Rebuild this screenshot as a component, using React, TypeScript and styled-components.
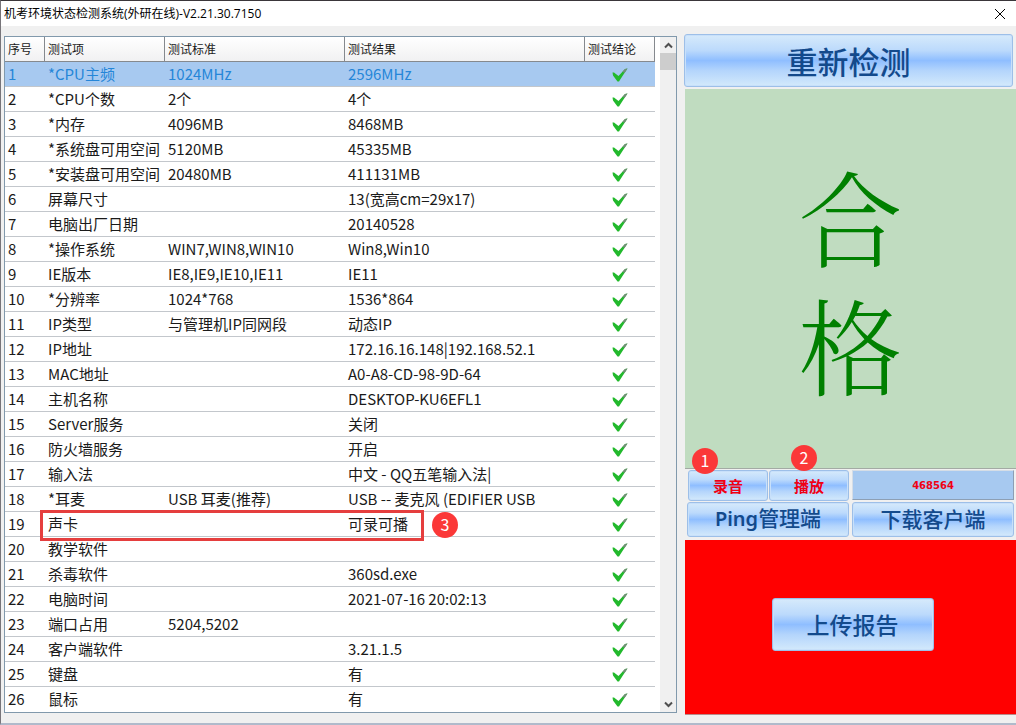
import React from 'react';
import styled, { createGlobalStyle } from 'styled-components';

const GlobalStyle = createGlobalStyle`
  *, *::before, *::after { box-sizing: border-box; }
  body {
    margin: 0;
    background: #f0f0f0;
    color: #1a1a1a;
    font-family: "Noto Sans CJK SC", sans-serif;
  }
  button, input { font-family: inherit; }
`;

const Window = styled.div`
  min-height: 100vh;
  display: flex;
  flex-direction: column;
  overflow: hidden;
  border-top: 1px solid #3a363a;
  border-left: 1px solid #77757a;
  border-bottom: 2px solid #b0bacb;
`;

const TitleBar = styled.header`
  display: flex;
  align-items: center;
  justify-content: space-between;
  height: 25px;
  padding: 0 8px 0 3px;
  background: #fff;
`;

const Title = styled.h1`
  margin: 0;
  font-family: "Open Sans", "Noto Sans CJK SC", sans-serif;
  font-size: 12px;
  line-height: 24px;
  font-weight: 400;
  color: #000;
`;

const CloseButton = styled.button`
  display: flex;
  padding: 2px;
  border: 0;
  background: none;
`;

const Content = styled.main`
  flex: 1;
  display: grid;
  grid-template-columns: minmax(0, 1fr) 332px;
  gap: 7px;
  padding: 8px 0 8px 3px;
`;

const ListPanel = styled.section`
  display: flex;
  align-self: start;
  margin-top: 2px;
  border: 1px solid #8199ac;
  background: #fff;
`;

const TableArea = styled.div`
  flex: 1;
  min-width: 0;
  padding-right: 5px;
`;

const Table = styled.table`
  width: 100%;
  table-layout: fixed;
  border-collapse: separate;
  border-spacing: 0;
`;

const HeadCell = styled.th<{ $width?: number }>`
  width: ${(p) => (p.$width ? `${p.$width}px` : 'auto')};
  height: 25px;
  padding: 0 3px;
  border-right: 1px solid #85898e;
  border-bottom: 1px solid #85898e;
  background: linear-gradient(#fff, #f1f1f2);
  font-size: 12px;
  line-height: 20px;
  font-weight: 400;
  text-align: left;
  white-space: nowrap;
`;

const Row = styled.tr<{ $selected?: boolean }>`
  position: relative;
  background: ${(p) => (p.$selected ? '#a7c9f0' : '#fff')};
  color: ${(p) => (p.$selected ? '#2586d8' : '#1a1a1a')};
`;

const Cell = styled.td`
  height: 25px;
  padding: 0 0 0 3px;
  border-bottom: 1px solid #c3c7cc;
  font-size: 15px;
  line-height: 24px;
  white-space: nowrap;

  tr:last-child > & { border-bottom-color: #fff; }
`;

const CheckCell = styled(Cell)`
  padding: 2px 0 0;
  text-align: center;

  svg { display: block; margin: 0 auto; }
`;

const Highlight = styled.span`
  position: absolute;
  top: -2px;
  left: 35px;
  z-index: 1;
  width: 384px;
  height: 31px;
  border: 3px solid #e53e3e;
`;

const Badge = styled.span<{ $top: number; $left: number }>`
  position: absolute;
  top: ${(p) => p.$top}px;
  left: ${(p) => p.$left}px;
  z-index: 1;
  width: 26px;
  height: 26px;
  border-radius: 50%;
  background: #fb3838;
  color: #fff;
  font-size: 16px;
  line-height: 25px;
  text-align: center;
`;

const ScrollBar = styled.div`
  display: flex;
  flex-direction: column;
  width: 16px;
  background: #f0f0f0;
`;

const ScrollArrow = styled.button`
  display: flex;
  align-items: center;
  justify-content: center;
  height: 16px;
  padding: 0;
  border: 0;
  background: none;
`;

const ScrollTrack = styled.div`
  flex: 1;
`;

const ScrollThumb = styled.div`
  height: 17px;
  background: #cdcdcd;
`;

const Side = styled.aside`
  display: flex;
  flex-direction: column;
`;

const GlossButton = styled.button<{ $size: number; $height: number; $strong?: boolean; $color?: string }>`
  height: ${(p) => p.$height}px;
  padding: 0;
  border: 1px solid #9dbfe8;
  border-radius: 3px;
  background: linear-gradient(#d6eafb 0%, #bcdafc 30%, #8fbeff 50%, #b4d5fc 70%, #d3e9fb 100%);
  box-shadow: inset 0 0 0 1px #c8e0fa;
  color: ${(p) => p.$color ?? '#134a8c'};
  font-size: ${(p) => p.$size}px;
  line-height: 1;
  font-weight: ${(p) => (p.$strong ? 700 : 500)};
  white-space: nowrap;
`;

const RetestButton = styled(GlossButton)`
  margin-right: 3px;
`;

const ToolButton = styled(GlossButton)`
  padding-bottom: 3px;

  b {
    font-family: "Noto Sans", sans-serif;
    font-size: 20px;
    font-weight: 600;
  }
`;

const Verdict = styled.div`
  flex: 1;
  display: flex;
  flex-direction: column;
  align-items: center;
  justify-content: center;
  margin: 2px 0 0 1px;
  border-bottom: 1px solid #a3aaa4;
  background: #c0dcc0;
`;

const VerdictText = styled.div`
  width: 1em;
  color: #008000;
  font-family: "Noto Serif CJK SC", "Noto Sans CJK SC", serif;
  font-size: 104px;
  line-height: 128px;
  font-weight: 300;
  word-break: break-all;
`;

const Controls = styled.div`
  position: relative;
  display: grid;
  grid-template-columns: 1fr 1fr;
  gap: 1px 3px;
  padding: 1px 2px 3px 3px;
`;

const AudioButtons = styled.div`
  display: grid;
  grid-template-columns: 1fr 1fr;
  gap: 1px;
  padding-left: 1px;
`;

const CodeField = styled.input`
  width: 100%;
  height: 30px;
  padding: 0;
  border: 1px solid;
  border-color: #d5dde6 #8d9fb4 #8d9fb4 #d5dde6;
  background: #a7c9f0;
  color: #f00014;
  font: 700 10px/20px "DejaVu Sans", sans-serif;
  text-align: center;
`;

const UploadPanel = styled.div`
  display: flex;
  align-items: center;
  justify-content: center;
  height: 175px;
  margin-left: 1px;
  padding: 0 0 6px 4px;
  border-bottom: 1px solid #b98a8a;
  background: #f00;
`;

const UploadButton = styled(GlossButton)`
  width: 162px;
`;

const CheckMark = () => (
  <svg width="16" height="14" viewBox="0 0 16 14" role="img" aria-label="合格">
    <path d="M0.5 4.5 L2 4.5 L6.5 8 L13 1 L15.5 0.5 L10.5 8 L7 13.5 L5.5 13.5 L1 7.5 Z" fill="#22b92c" />
    <path d="M10.5 3.7 L13 1 L15.5 0.5 L12.5 5 Z" fill="#748c78" />
  </svg>
);

const Chevron = ({ down }: { down?: boolean }) => (
  <svg width="9" height="7" viewBox="0 0 9 7" fill="none" stroke="#505050" strokeWidth="2" aria-hidden="true">
    <path d={down ? 'M1 1.5 L4.5 5 L8 1.5' : 'M1 5.5 L4.5 2 L8 5.5'} />
  </svg>
);

type Item = [name: string, standard: string, result: string];

const items: Item[] = [
  ['*CPU主频', '1024MHz', '2596MHz'],
  ['*CPU个数', '2个', '4个'],
  ['*内存', '4096MB', '8468MB'],
  ['*系统盘可用空间', '5120MB', '45335MB'],
  ['*安装盘可用空间', '20480MB', '411131MB'],
  ['屏幕尺寸', '', '13(宽高cm=29x17)'],
  ['电脑出厂日期', '', '20140528'],
  ['*操作系统', 'WIN7,WIN8,WIN10', 'Win8,Win10'],
  ['IE版本', 'IE8,IE9,IE10,IE11', 'IE11'],
  ['*分辨率', '1024*768', '1536*864'],
  ['IP类型', '与管理机IP同网段', '动态IP'],
  ['IP地址', '', '172.16.16.148|192.168.52.1'],
  ['MAC地址', '', 'A0-A8-CD-98-9D-64'],
  ['主机名称', '', 'DESKTOP-KU6EFL1'],
  ['Server服务', '', '关闭'],
  ['防火墙服务', '', '开启'],
  ['输入法', '', '中文 - QQ五笔输入法|'],
  ['*耳麦', 'USB 耳麦(推荐)', 'USB -- 麦克风 (EDIFIER USB'],
  ['声卡', '', '可录可播'],
  ['教学软件', '', ''],
  ['杀毒软件', '', '360sd.exe'],
  ['电脑时间', '', '2021-07-16 20:02:13'],
  ['端口占用', '5204,5202', ''],
  ['客户端软件', '', '3.21.1.5'],
  ['键盘', '', '有'],
  ['鼠标', '', '有'],
];

const SELECTED = 0;
const MARKED = 18;

export default function App() {
  return (
    <>
      <GlobalStyle />
      <Window>
        <TitleBar>
          <Title>机考环境状态检测系统(外研在线)-V2.21.30.7150</Title>
          <CloseButton aria-label="关闭">
            <svg width="12" height="12" viewBox="0 0 12 12" stroke="#000" strokeWidth="1" aria-hidden="true">
              <path d="M1 1 L11 11 M11 1 L1 11" />
            </svg>
          </CloseButton>
        </TitleBar>
        <Content>
          <ListPanel>
            <TableArea>
              <Table>
                <thead>
                  <tr>
                    <HeadCell $width={40}>序号</HeadCell>
                    <HeadCell $width={120}>测试项</HeadCell>
                    <HeadCell $width={180}>测试标准</HeadCell>
                    <HeadCell>测试结果</HeadCell>
                    <HeadCell $width={70}>测试结论</HeadCell>
                  </tr>
                </thead>
                <tbody>
                  {items.map(([name, standard, result], i) => (
                    <Row key={name} $selected={i === SELECTED}>
                      <Cell>
                        {i + 1}
                        {i === MARKED && (
                          <>
                            <Highlight />
                            <Badge $top={0} $left={427}>3</Badge>
                          </>
                        )}
                      </Cell>
                      <Cell>{name}</Cell>
                      <Cell>{standard}</Cell>
                      <Cell>{result}</Cell>
                      <CheckCell><CheckMark /></CheckCell>
                    </Row>
                  ))}
                </tbody>
              </Table>
            </TableArea>
            <ScrollBar>
              <ScrollArrow aria-label="向上滚动"><Chevron /></ScrollArrow>
              <ScrollTrack><ScrollThumb /></ScrollTrack>
              <ScrollArrow aria-label="向下滚动"><Chevron down /></ScrollArrow>
            </ScrollBar>
          </ListPanel>
          <Side>
            <RetestButton $size={31} $height={53}>重新检测</RetestButton>
            <Verdict>
              <VerdictText>合格</VerdictText>
            </Verdict>
            <Controls>
              <Badge $top={-21} $left={8}>1</Badge>
              <Badge $top={-24} $left={107}>2</Badge>
              <AudioButtons>
                <GlossButton $size={15} $height={31} $strong $color="#f00014">录音</GlossButton>
                <GlossButton $size={15} $height={31} $strong $color="#f00014">播放</GlossButton>
              </AudioButtons>
              <CodeField aria-label="验证码" readOnly value="468564" />
              <ToolButton $size={21} $height={35}><b>Ping</b>管理端</ToolButton>
              <ToolButton $size={21} $height={35}>下载客户端</ToolButton>
            </Controls>
            <UploadPanel>
              <UploadButton $size={23} $height={53}>上传报告</UploadButton>
            </UploadPanel>
          </Side>
        </Content>
      </Window>
    </>
  );
}
